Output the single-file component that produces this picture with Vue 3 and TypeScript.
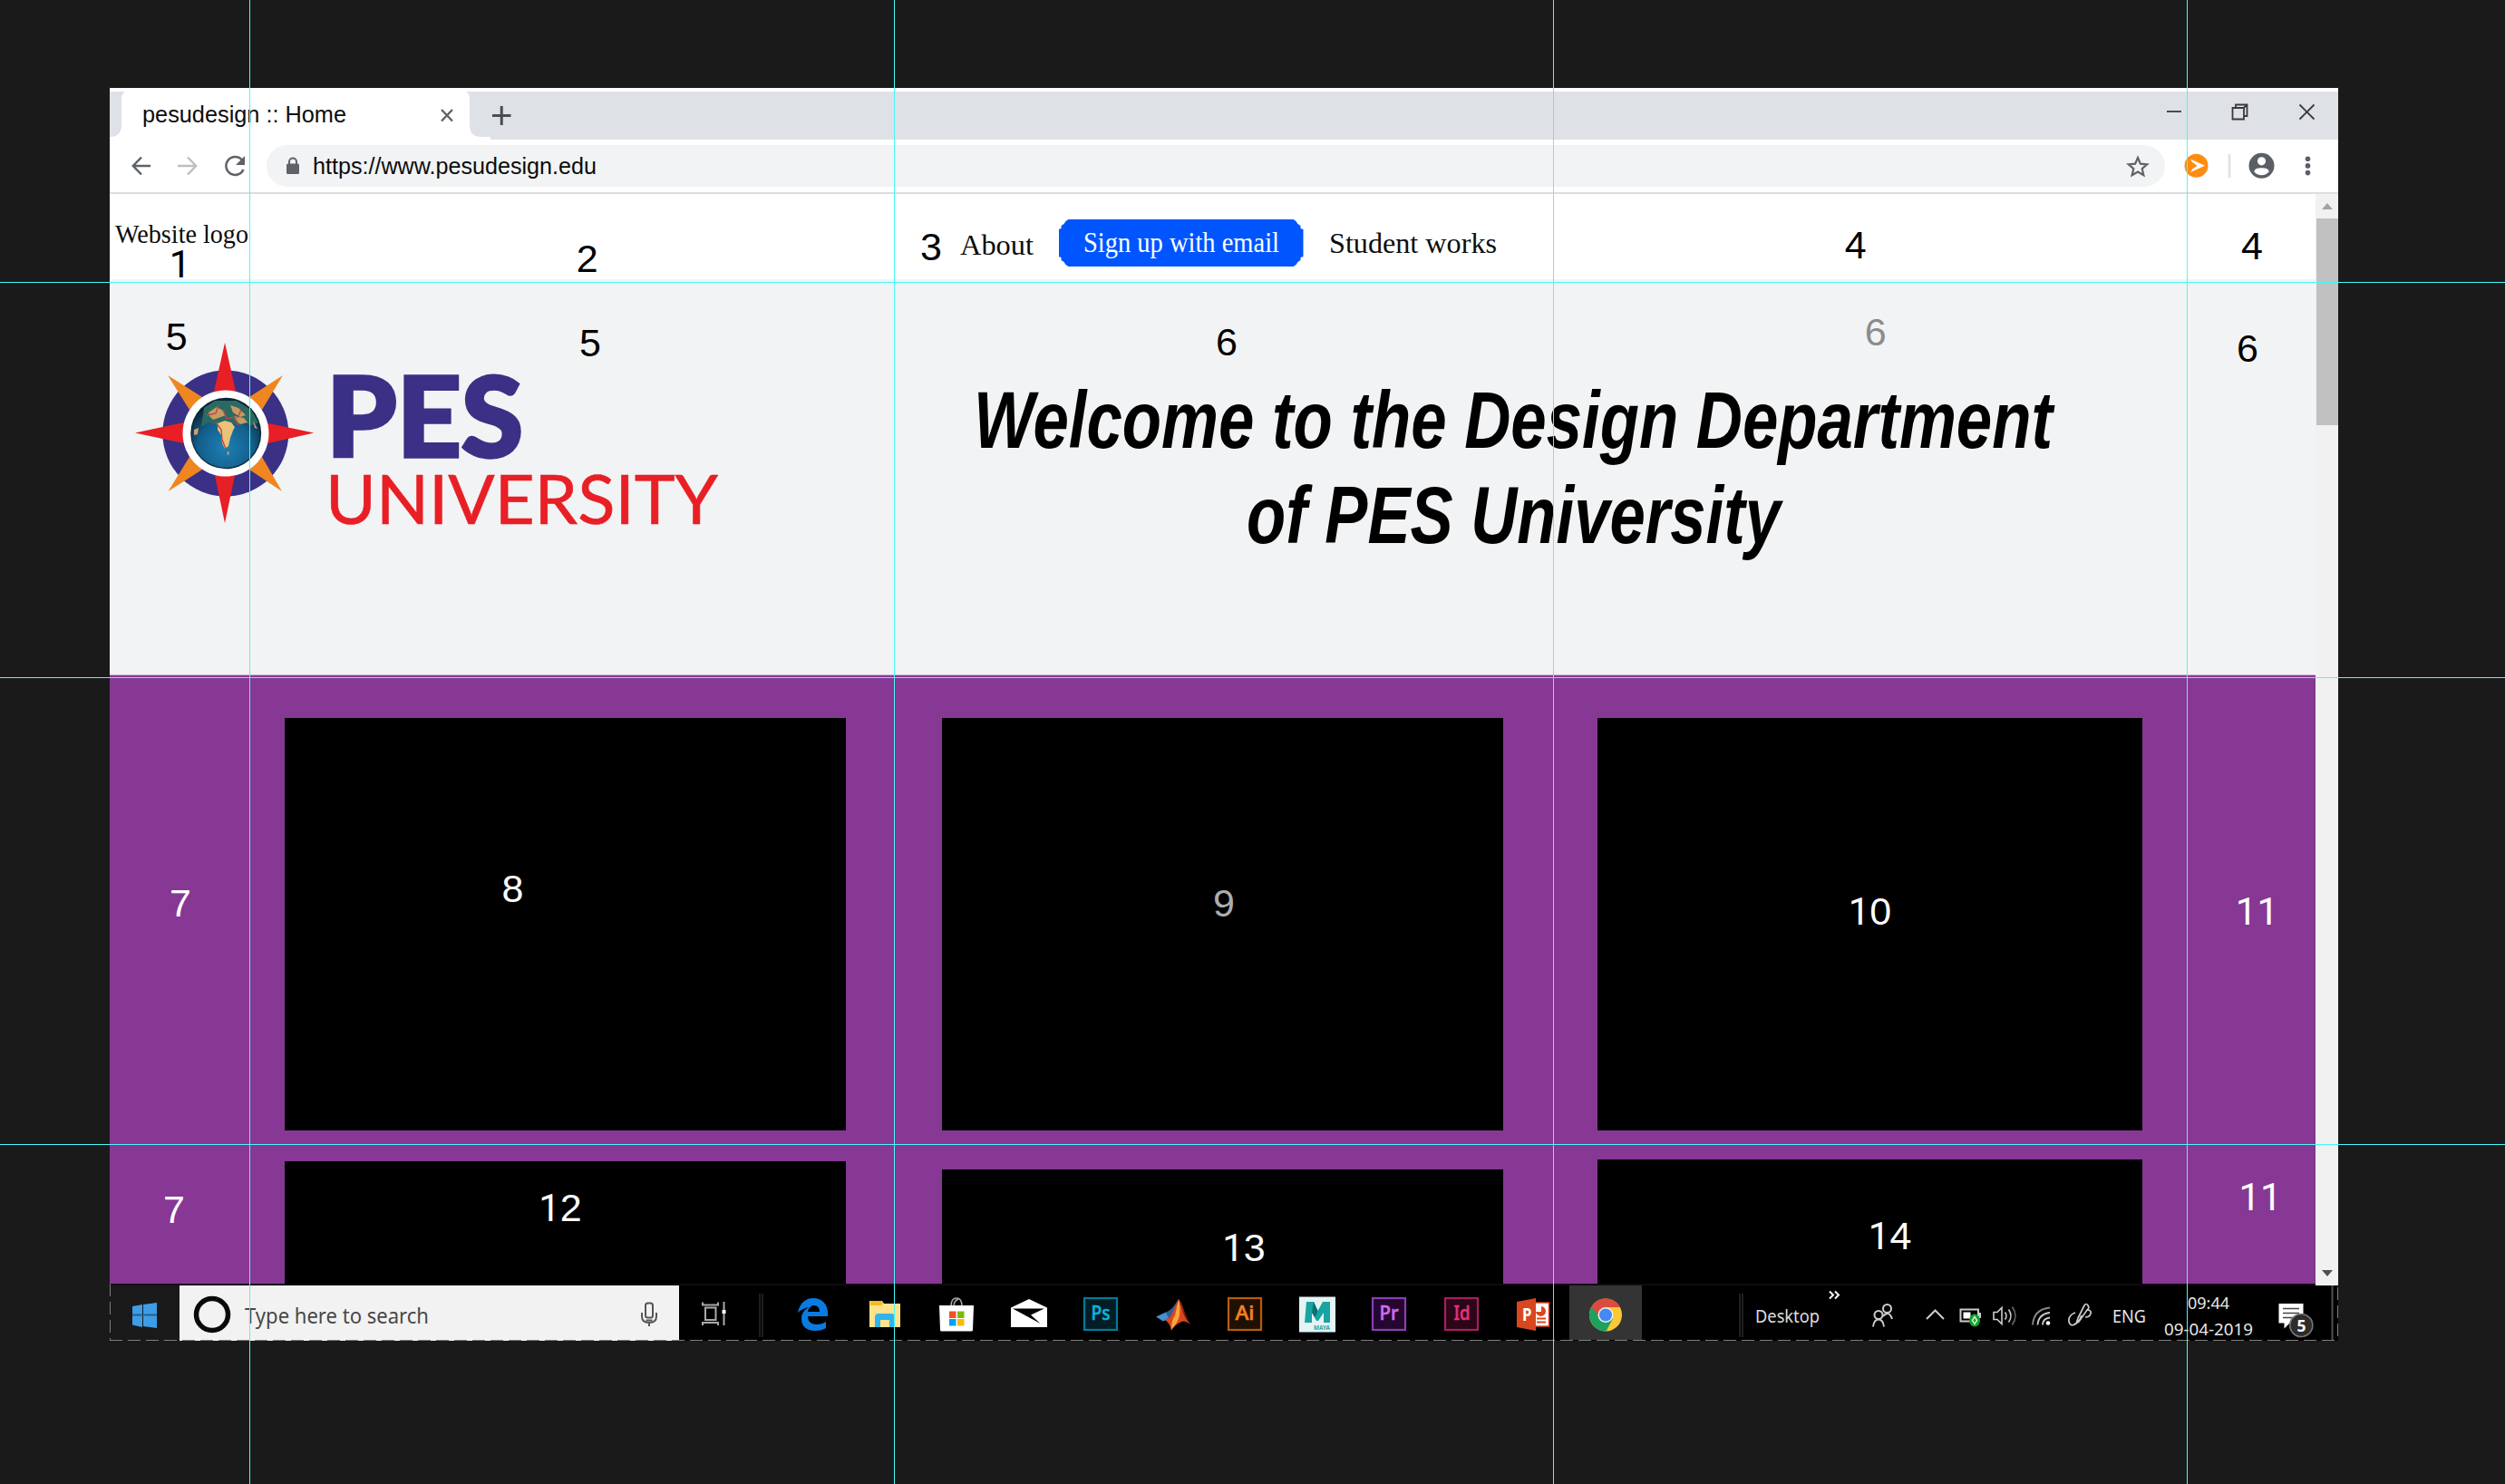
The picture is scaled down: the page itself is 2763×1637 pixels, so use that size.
<script setup lang="ts">
import { h, type FunctionalComponent } from 'vue'

interface FitProps {
  t: string
  w: number
  size: number
  y: number
  h: number
  family?: string
  fill?: string
  weight?: string | number
  slant?: string
}

/* Text fitted to an exact advance width, with its baseline at y inside a box of height h */
const Fit: FunctionalComponent<FitProps> = (p) =>
  h('svg', { width: p.w, height: p.h, style: 'flex:none;display:block;overflow:visible' }, [
    h(
      'text',
      {
        x: 0,
        y: p.y,
        'font-size': p.size,
        'font-family': p.family ?? '"Liberation Sans", sans-serif',
        'font-weight': p.weight ?? 400,
        'font-style': p.slant ?? 'normal',
        fill: p.fill ?? '#0c0c0c',
        textLength: p.w,
        lengthAdjust: 'spacingAndGlyphs',
      },
      p.t,
    ),
  ])
Fit.props = ['t', 'w', 'size', 'y', 'h', 'family', 'fill', 'weight', 'slant']

const serif = '"Liberation Serif", serif'
const ui = '"Noto Sans", "Open Sans", sans-serif'

interface Mark {
  t: string
  x: number
  y: number
  c?: string
}

const marks: Mark[] = [
  { t: '1', x: 198.5, y: 305.6 },
  { t: '2', x: 647.6, y: 300 },
  { t: '3', x: 1027, y: 287.3 },
  { t: '4', x: 2046.6, y: 284.6 },
  { t: '4', x: 2484, y: 285.6 },
  { t: '5', x: 194.8, y: 386.4 },
  { t: '5', x: 651, y: 393.4 },
  { t: '6', x: 1353, y: 391.8 },
  { t: '6', x: 2068.6, y: 380.8, c: '#8c8c8c' },
  { t: '6', x: 2479, y: 399 },
  { t: '7', x: 199, y: 1011, c: '#fff' },
  { t: '8', x: 565.4, y: 994.6, c: '#fff' },
  { t: '9', x: 1350, y: 1011, c: '#adadad' },
  { t: '10', x: 2062.4, y: 1020.2, c: '#fff' },
  { t: '11', x: 2489.4, y: 1020.2, c: '#fff' },
  { t: '7', x: 192, y: 1349, c: '#fff' },
  { t: '12', x: 618, y: 1347.4, c: '#fff' },
  { t: '13', x: 1372, y: 1390.6, c: '#fff' },
  { t: '14', x: 2084.6, y: 1378, c: '#fff' },
  { t: '11', x: 2493, y: 1335, c: '#fff' },
]

const digitFont = (d: string) => (d === '1' ? 'Roboto, sans-serif' : '"Liberation Sans", sans-serif')
const digitSize = (d: string) => (d === '1' ? 42 : 43)

const guidesX = [275, 986, 1713, 2412]
const guidesY = [311, 747, 1262]

const adobe = [
  { t: 'Ps', c: '#0bb3dc', line: '#067a97', bg: '#021d26' },
  { t: 'Ai', c: '#f58220', line: '#b85c0e', bg: '#201004' },
  { t: 'Pr', c: '#cb6df0', line: '#8a3fb0', bg: '#25062f' },
  { t: 'Id', c: '#e6307e', line: '#a52060', bg: '#2a0617' },
]
const apps = ['edge', 'folder', 'store', 'mail', 'Ps', 'matlab', 'Ai', 'maya', 'Pr', 'Id', 'ppt', 'chrome']
const adobeOf = (n: string) => adobe.find((a) => a.t === n)
</script>

<template>
  <div class="stage">
    <div class="window">
      <div class="tabs">
        <svg class="tab" width="420" height="57" viewBox="0 0 420 57">
          <path d="M0 57V54q13 0 13-13V13q0-10 8-10H389q8 0 8 10V41q0 13 13 13h10v3z" fill="#fff" />
        </svg>
        <div class="tab-row">
          <Fit class="tab-title" t="pesudesign :: Home" :w="225" :size="25" :y="37.700" :h="57" />
          <svg class="tab-close" width="14" height="57"><path d="M1 24 13 36.500M13 24 1 36.500" stroke="#5f6368" stroke-width="2.400" /></svg>
          <svg class="tab-add" width="21" height="57"><path d="M0 30.500H20.500M10.250 20V41" stroke="#4a4d51" stroke-width="3" /></svg>
          <svg class="win-ctl" width="165" height="57" fill="none" stroke="#3a3a3a" stroke-width="1.800">
            <path d="M1 26H17" />
            <path d="M73.500 22H86v12.500H73.500zM77 22V18.500H89.500V31H86M86 22l3.500-3.500" />
            <path d="M147.500 18.500 163.500 34.500M163.500 18.500 147.500 34.500" />
          </svg>
        </div>
      </div>

      <div class="toolbar">
        <svg class="nav" width="128" height="58" fill="none" stroke="#5f6368" stroke-width="2.500">
          <path d="M21 29H2M11 19.500 1.800 29 11 38.500" />
          <path d="M51 29H71M62 19.500 71.200 29 62 38.500" stroke="#bdbfc1" />
          <path d="M122 22.500A10 10 0 1 0 123.500 33" />
          <path d="M125 18v10h-10z" fill="#5f6368" stroke="none" />
        </svg>
        <div class="address">
          <svg width="16" height="46">
            <rect x="1" y="20.500" width="14" height="11.500" rx="1.500" fill="#5f6368" />
            <path d="M4 21v-2.500a4 4 0 0 1 8 0v2.500" fill="none" stroke="#5f6368" stroke-width="2" />
          </svg>
          <Fit class="url" t="https://www.pesudesign.edu" :w="313" :size="25.500" :y="32" :h="46" />
          <svg class="star" width="26" height="46" viewBox="0 0 26 46">
            <path d="M13 14l2.900 6.700 7.300.7-5.500 4.800 1.700 7.100L13 29.500l-6.400 3.800 1.700-7.100-5.500-4.800 7.300-.7z" fill="none" stroke="#5f6368" stroke-width="2.200" />
          </svg>
        </div>
        <svg class="tools" width="150" height="58">
          <circle cx="13.500" cy="28.800" r="13" fill="#ff8c12" />
          <path d="M7 21.500l16 7.300L7 36l4.500-7.200z" fill="#fff" />
          <path d="M9.500 25l5 3.800-5 3.700" fill="#ff8c12" />
          <path d="M50 16V42" stroke="#e0e1e3" stroke-width="2.600" />
          <circle cx="85.500" cy="28.800" r="14" fill="#5a5f66" />
          <circle cx="85.500" cy="23.800" r="4.600" fill="#fff" />
          <path d="M77.300 35.500q0-4.300 8.200-4.300t8.200 4.300q-3 3.700-8.200 3.700t-8.200-3.700z" fill="#fff" />
          <circle v-for="cy in [21.200, 28.900, 36.600]" :key="cy" cx="136.500" :cy="cy" r="2.800" fill="#5a5f66" />
        </svg>
      </div>

      <div class="viewport">
        <div class="page">
          <header class="site-head">
            <Fit class="logo-text" t="Website logo" :w="147" :size="30" :y="54.200" :h="94" :family="serif" />
            <Fit class="about" t="About" :w="81" :size="31" :y="66.500" :h="94" :family="serif" />
            <div class="signup">
              <Fit t="Sign up with email" :w="216" :size="31" :y="35.500" :h="52" :family="serif" fill="#fff" />
            </div>
            <Fit class="works" t="Student works" :w="185" :size="31" :y="65" :h="94" :family="serif" />
          </header>

          <section class="hero">
            <svg class="brand" width="650" height="200" viewBox="149 378 650 200">
              <defs>
                <radialGradient id="sea" cx=".5" cy=".7" r=".65">
                  <stop offset="0" stop-color="#1d80b4" />
                  <stop offset=".6" stop-color="#135f8c" />
                  <stop offset="1" stop-color="#0a2434" />
                </radialGradient>
                <clipPath id="ball"><ellipse cx="249.200" cy="478" rx="38" ry="38.500" /></clipPath>
              </defs>
              <circle cx="248.800" cy="478" r="69.500" fill="#3a3086" />
              <path d="M185 414 223 438 209 452zM312 414 275 438 289 452zM185.500 542 223 518 209 504zM311 542 275 518 289 504z" fill="#f0861f" />
              <path d="M248 378l12.500 56h-25zM248 577l11.500-55h-23zM149 477.500l56-12v24zM346.300 477.500l-55-11.500v24z" fill="#e81f25" />
              <circle cx="249" cy="478" r="47.500" fill="#fff" />
              <ellipse cx="249.200" cy="478" rx="39" ry="39.300" fill="#0b2735" />
              <g clip-path="url(#ball)">
                <circle cx="249" cy="478" r="38" fill="url(#sea)" />
                <path d="M225 450l12-8 24 0 16 10 8 14-9 4-7-6-10 4-10-5-9 6-10-3-8 5z" fill="#2b6a62" />
                <path d="M230 455l9-6 7 4 3 5-8 3-6 2-4-4zM254 447l9 3 8 8-6 2-8-5zM258 459l11 2 4 5-8 2-6-5z" fill="#c99a62" />
                <path d="M240 467l8-3 7 2 4 5-2 4-3 8-2 9-4 3-3-6-1-9-4-6z" fill="#eac27a" />
                <path d="M238 466l6 8 1 11 4 10M246 452l4 10 9-2 4 9M228 458l10-2 3-9M266 452l-4 9" fill="none" stroke="#b54a4a" stroke-width="1.400" />
                <path d="M214 474l5-2-1 7-4 1zM250 499l3-1-1 5zM279 464l5 9-3-1z" fill="#d89a6a" />
              </g>
              <text x="360" y="503.500" textLength="217" lengthAdjust="spacingAndGlyphs" font-family="Lato, sans-serif" font-weight="900" font-size="122" stroke="#3a3086" stroke-width="3.500" fill="#3a3086">PES</text>
              <text x="359" y="578" textLength="433" lengthAdjust="spacingAndGlyphs" font-family="Lato, sans-serif" font-size="75" stroke="#e81f25" stroke-width=".6" fill="#e81f25">UNIVERSITY</text>
            </svg>
            <div class="welcome">
              <Fit t="Welcome to the Design Department" :w="1190" :size="89" :y="76" :h="104.500" weight="bold" slant="italic" fill="#000" />
              <Fit t="of PES University" :w="589" :size="89" :y="76" :h="104" weight="bold" slant="italic" fill="#000" />
            </div>
          </section>

          <section class="gallery">
            <div class="col c1"><div class="tile" /><div class="tile rest" /></div>
            <div class="col c2"><div class="tile" /><div class="tile rest" /></div>
            <div class="col c3"><div class="tile" /><div class="tile rest" /></div>
          </section>
        </div>

        <div class="scroll">
          <div class="arrow up"><i /></div>
          <div class="thumb" />
          <div class="arrow down"><i /></div>
        </div>
      </div>

      <footer class="taskbar">
        <div class="start">
          <svg width="27" height="28" viewBox="0 0 27 28">
            <path d="M0 4 11 2v25L0 24.500zM12 2 27 0v28L12 26z" fill="#3f9de6" />
            <path d="M0 13.500H27" stroke="#23608f" stroke-width="2" />
          </svg>
        </div>
        <div class="search">
          <svg class="ring" width="46" height="60"><ellipse cx="23" cy="32" rx="17.500" ry="17.500" fill="none" stroke="#0a0a0a" stroke-width="5.500" /></svg>
          <Fit t="Type here to search" :w="203" :size="24" :y="42" :h="60" :family="ui" fill="#484848" />
          <svg class="mic" width="20" height="60" fill="none" stroke="#555" stroke-width="2">
            <rect x="6" y="19.500" width="8" height="16" rx="2.500" />
            <path d="M2 30v4q0 7 8 7t8-7v-4M10 41v4M6.500 38.500h7" />
          </svg>
        </div>
        <svg class="taskview" width="28" height="60" fill="none" stroke="#aaa" stroke-width="2">
          <path d="M4 24.500H15.500V38H4zM1 18.500v3H18v-3M1 44v-3H18v3M24.500 18v26" />
          <rect x="22.500" y="27" width="4" height="4" fill="#fff" stroke="none" />
        </svg>
        <div class="rule r1" />

        <div class="apps">
          <div v-for="name in apps" :key="name" class="app" :class="{ active: name === 'chrome' }">
            <svg width="40" height="40" viewBox="0 0 40 40">
              <g v-if="adobeOf(name)">
                <rect x="2" y="2" width="36" height="35" :fill="adobeOf(name)!.bg" :stroke="adobeOf(name)!.line" stroke-width="2.200" />
                <text :x="name === 'Id' ? 11.500 : 9.500" y="26" :textLength="name === 'Id' ? 18 : 21" lengthAdjust="spacingAndGlyphs" font-family="'Noto Sans', sans-serif" font-weight="500" font-size="22.500" :fill="adobeOf(name)!.c" :stroke="adobeOf(name)!.c" stroke-width=".6">{{ name }}</text>
              </g>
              <path v-else-if="name === 'edge'" fill="#0a7be0" d="M4 18C6 8 12 2 21 2c10 0 16 7 16 16v4H15c0 6 4 9 10 9 4 0 7-1 10-3v7c-3 2-7 3-12 3C14 38 8 33 8 25c0-6 3-10 8-13-5 1-9 3-12 6zM15 17h13c0-4-2-7-6-7s-6 3-7 7z" />
              <g v-else-if="name === 'folder'">
                <path d="M3 5h14l2 3h18v26H3z" fill="#ffe28c" />
                <path d="M4 5h12l2 3-2 2H4z" fill="#f6bb22" />
                <path d="M9 34V23q0-4 4-4h14q4 0 4 4v11h-6v-8H15v8z" fill="#2fb4ec" />
              </g>
              <g v-else-if="name === 'store'">
                <path d="M14 11q0-9 6-9t6 9M17 11q0-6 5-8" fill="none" stroke="#aaa" stroke-width="1.500" />
                <path d="M1 10H39l-1 27q0 1.500-1.500 1.500h-33Q2 38.500 2 37z" fill="#fff" />
                <path d="M12 16.500h7.500v7.500H12z" fill="#f25022" />
                <path d="M21 16.500h7.500v7.500H21z" fill="#7fba00" />
                <path d="M12 25h7.500v7.500H12z" fill="#00a4ef" />
                <path d="M21 25h7.500v7.500H21z" fill="#ffb900" />
              </g>
              <g v-else-if="name === 'mail'">
                <path d="M0 12.500 20 3l20 9.500V34H0z" fill="#fff" />
                <path d="M2 13.500H37L22 20.500l10.500 9.500z" fill="#000" />
              </g>
              <g v-else-if="name === 'matlab'">
                <path d="M1 22.500l11-5 5 6-8 4z" fill="#4a8fd0" />
                <path d="M12 17.500q8-3 13-14l-6 22-4-1z" fill="#2f5f9a" />
                <path d="M11 26q4-1 7-5l8-18q3 3 6 13 3 10 7 15-5-5-10-3-7 3-11 10-1-8-7-12z" fill="#d9471d" />
                <path d="M18 36q0-10 4-15l4-18q2 8 1 18-2 9-9 15z" fill="#f9a63a" />
                <path d="M26 3q3 3 6 13 3 10 7 15-6-6-8-13T26 3z" fill="#7c1d14" />
              </g>
              <g v-else-if="name === 'maya'">
                <rect x="0" y=".5" width="40" height="39" fill="#e4f3f3" />
                <path d="M6 29 8 6h8l4.500 10L26 6h8v23h-7V18l-6 9h-2l-5-9v11z" fill="#1aa3a0" />
                <path d="M16 6l4.500 10-3 7L14 18z" fill="#0c6f72" />
                <text x="16" y="37" font-family="'Noto Sans', sans-serif" font-weight="bold" font-size="7" textLength="18" lengthAdjust="spacingAndGlyphs" fill="#2aa5a3">MAYA</text>
              </g>
              <g v-else-if="name === 'ppt'">
                <rect x="20" y="7" width="17.500" height="26" fill="#fff" stroke="#d9471f" stroke-width="1.500" />
                <path d="M23 17a5.500 5.500 0 1 0 6-6v6z" fill="#d9471f" />
                <path d="M24 24.500h10M24 28.500h10" stroke="#d9471f" stroke-width="2" />
                <path d="M2 6 23 2v36L2 34z" fill="#d9471f" />
                <text x="8" y="27" font-family="'Noto Sans', sans-serif" font-weight="bold" font-size="19" textLength="10.500" lengthAdjust="spacingAndGlyphs" fill="#fff">P</text>
              </g>
              <g v-else>
                <circle cx="20" cy="20.500" r="18" fill="#fbc934" />
                <path d="M20 20.500 4.500 11.500A18 18 0 0 0 20.500 38.500L28 24.500z" fill="#1ea15f" />
                <path d="M20 20.500H12L4.300 11.800A18 18 0 0 1 35.800 12H20z" fill="#dc4b3e" />
                <circle cx="20" cy="20.500" r="8.500" fill="#f1f1f1" />
                <circle cx="20" cy="20.500" r="7" fill="#4688f4" />
              </g>
            </svg>
          </div>
        </div>

        <div class="rule r2" />
        <Fit class="desk" t="Desktop" :w="71" :size="19.500" :y="40.500" :h="60" :family="ui" fill="#ddd" />
        <svg class="tray" width="306" height="60" viewBox="2015 1418 306 60" fill="none" stroke="#ccc" stroke-width="2">
          <path d="M2018 1424.500l4 4-4 4M2024 1424.500l4 4-4 4" stroke="#fff" />
          <circle cx="2081.500" cy="1443.500" r="4.500" />
          <circle cx="2072" cy="1450.500" r="4.500" />
          <path d="M2066 1463.500q1-8 6-8t6 8M2077 1452q2-3 5-3t5 6" />
          <path d="M2125 1455l9.500-9.500 9.500 9.500" />
          <rect x="2162.500" y="1444.500" width="19.500" height="13" />
          <rect x="2165.500" y="1447.500" width="8" height="7" fill="#fff" stroke="none" />
          <path d="M2184 1448v6" />
          <ellipse cx="2178" cy="1456.500" rx="6" ry="7" fill="#16a329" stroke="none" />
          <path d="M2178 1452.500l-2.500 4 2.500 4 2.500-4z" stroke="#e9ffe9" stroke-width="1.400" />
          <path d="M2199 1447.500h4l5-5v18l-5-5h-4z" stroke-width="1.600" />
          <path d="M2211.500 1447.500q3 4 0 8M2215.500 1444.500q5 7 0 14" stroke-width="1.600" />
          <path d="M2219.500 1441.500q7 10 0 20" stroke="#666" stroke-width="1.600" />
          <g stroke-width="1.800">
            <path d="M2242 1461.500q1-17 19-19" stroke="#888" />
            <path d="M2247.500 1461.500q1-12 13.500-13.500" />
            <path d="M2253 1461.500q0-7 8-8" />
          </g>
          <circle cx="2259" cy="1459.500" r="2.300" fill="#fff" stroke="none" />
          <path d="M2292 1454l7-14q2-3 4 0t-1 5l-9 13-3 2zM2289 1448q-8 3-7 10 2 7 9 1 4-4 5-8M2302 1445q5 0 4 4t-6 4" stroke-width="1.700" />
        </svg>
        <Fit class="lang" t="ENG" :w="37" :size="19" :y="40.500" :h="60" :family="ui" fill="#e6e6e6" />
        <div class="clock">
          <Fit t="09:44" :w="46" :size="18.500" :y="26" :h="28" :family="ui" fill="#e6e6e6" />
          <Fit t="09-04-2019" :w="98" :size="18.500" :y="27.300" :h="28" :family="ui" fill="#e6e6e6" />
        </div>
        <svg class="notes" width="64" height="60" viewBox="2514 1418 64 60">
          <path d="M2514.500 1438h27v21.500h-15l-6 6v-6h-6z" fill="#fff" />
          <path d="M2519 1443.500h18M2519 1448.500h18M2519 1453.500h12" stroke="#444" stroke-width="1.600" />
          <circle cx="2539.300" cy="1462" r="12.500" fill="#2c2c2c" stroke="#777" stroke-width="1.600" />
          <text x="2534.500" y="1468.500" font-family="'Noto Sans', sans-serif" font-weight="bold" font-size="18" textLength="10" lengthAdjust="spacingAndGlyphs" fill="#fff">5</text>
          <path d="M2573.500 1418V1478" stroke="#505050" stroke-width="2" />
        </svg>
      </footer>
    </div>

    <svg class="overlay" width="2763" height="1637">
      <path d="M121 1478.500H2579" stroke="#7d7d7d" stroke-width="1" stroke-dasharray="14 6" />
      <path d="M121.500 1416V1479M2578.500 1420V1479" stroke="#7d7d7d" stroke-width="1" stroke-dasharray="14 6" />
      <text v-for="(m, i) in marks" :key="i" :x="m.x" :y="m.y" text-anchor="middle" :fill="m.c ?? '#000'">
        <tspan v-for="(d, j) in m.t" :key="j" :font-family="digitFont(d)" :font-size="digitSize(d)">{{ d }}</tspan>
      </text>
      <rect v-for="x in guidesX" :key="'x' + x" :x="x" y="0" width="1" height="1637" fill="#4af8f8" />
      <rect v-for="y in guidesY" :key="'y' + y" x="0" :y="y" width="2763" height="1" fill="#4af8f8" />
    </svg>
  </div>
</template>

<style>
body {
  background: #1a1a1a;
}
</style>

<style scoped>
.stage {
  position: relative;
  width: 2763px;
  height: 1637px;
  box-sizing: border-box;
  padding: 97px 0 0 121px;
  background: #1a1a1a;
  overflow: hidden;
}
.window {
  width: 2458px;
  height: 1382px;
  display: flex;
  flex-direction: column;
  background: #fff;
}
.overlay {
  position: absolute;
  left: 0;
  top: 0;
}
.tabs {
  position: relative;
  height: 57px;
  flex: none;
  background: linear-gradient(#fff 0 4px, #dee1e6 4px);
}
.tab {
  position: absolute;
  left: 0;
  top: 0;
}
.tab-row {
  position: relative;
  display: flex;
}
.tab-title {
  margin-left: 35.500px;
}
.tab-close {
  margin-left: 104px;
}
.tab-add {
  margin-left: 43.500px;
}
.win-ctl {
  margin-left: auto;
  margin-right: 25.500px;
}
.toolbar {
  display: flex;
  height: 58px;
  flex: none;
  border-bottom: 2px solid #dcdddd;
}
.nav {
  margin-left: 24px;
}
.address {
  display: flex;
  width: 2094px;
  height: 46px;
  box-sizing: border-box;
  margin: 6px 0 0 21px;
  padding-left: 21px;
  border-radius: 23px;
  background: #f1f3f4;
}
.url {
  margin-left: 14px;
}
.star {
  margin-left: auto;
  margin-right: 17px;
}
.tools {
  margin-left: 21px;
}
.viewport {
  display: flex;
  height: 1204px;
  flex: none;
}
.page {
  width: 2433px;
  display: flex;
  flex-direction: column;
}
.site-head {
  display: flex;
  height: 94px;
  flex: none;
  background: #fff;
}
.logo-text {
  margin-left: 6px;
}
.about {
  margin-left: 784.500px;
}
.signup {
  width: 270px;
  height: 52px;
  box-sizing: border-box;
  margin: 28px 0 0 28px;
  padding-left: 27px;
  background: #0055ff;
  clip-path: polygon(0 11px, 3px 10px, 3px 7px, 6px 5px, 8px 2px, 11px 0, 259px 0, 262px 2px, 264px 5px, 267px 7px, 267px 10px, 270px 11px, 270px 41px, 267px 42px, 267px 45px, 264px 47px, 262px 50px, 259px 52px, 11px 52px, 8px 50px, 6px 47px, 3px 45px, 3px 42px, 0 41px);
}
.works {
  margin-left: 28.500px;
}
.hero {
  display: flex;
  height: 437px;
  flex: none;
  background: #f1f3f4;
  box-shadow: inset 0 -1px #cbb3d0;
}
.brand {
  margin: 70px 0 0 28px;
  flex: none;
  overflow: visible;
}
.welcome {
  display: flex;
  flex-direction: column;
  align-items: center;
  width: 1190px;
  margin: 110px 0 0 275px;
}
.gallery {
  display: flex;
  flex: 1;
  min-height: 0;
  padding: 47px 0 2px 193px;
  background: #863894;
  box-shadow: inset 0 -2px #120a14;
}
.col {
  display: flex;
  flex-direction: column;
}
.c1 {
  width: 618.500px;
  gap: 34px;
}
.c2 {
  width: 619px;
  margin-left: 106px;
  gap: 43px;
}
.c3 {
  width: 601px;
  margin-left: 104.500px;
  gap: 32px;
}
.tile {
  height: 455px;
  background: #000;
}
.tile.rest {
  height: auto;
  flex: 1;
}
.scroll {
  display: flex;
  flex-direction: column;
  width: 25px;
  background: #f1f1f1;
}
.arrow {
  height: 27px;
  display: flex;
  align-items: center;
  justify-content: center;
}
.arrow i {
  border: 6px solid transparent;
}
.up i {
  border-top: 0;
  border-bottom: 7px solid #a3a3a3;
}
.down {
  margin-top: auto;
}
.down i {
  border-bottom: 0;
  border-top: 7px solid #505050;
}
.thumb {
  height: 228px;
  margin-left: 1px;
  background: #c1c1c1;
}
.taskbar {
  display: flex;
  height: 61px;
  flex: none;
  background: #000;
}
.start {
  width: 77px;
  display: flex;
  align-items: center;
  padding-left: 25px;
  box-sizing: border-box;
  padding-bottom: 1px;
  padding-top: 5px;
  background: #1a1a1a;
}
.search {
  display: flex;
  width: 551px;
  background: #f2f2f2;
}
.ring {
  margin: 0 13px 0 13px;
}
.mic {
  margin-left: auto;
  margin-right: 23px;
}
.taskview {
  margin-left: 25px;
}
.rule {
  width: 1px;
  height: 48px;
  margin-top: 9px;
  border-left: 2px solid #1e1e1e;
  border-right: 2px solid #1e1e1e;
}
.r1 {
  margin-left: 35px;
}
.apps {
  display: flex;
  width: 954px;
  margin-left: 14.500px;
}
.app {
  width: 79.500px;
  display: flex;
  justify-content: center;
  padding-top: 12px;
  height: 48px;
}
.active {
  background: #343434;
}
.r2 {
  margin-left: 107px;
}
.desk {
  margin-left: 13px;
}
.tray {
  flex: none;
  margin-left: 8px;
}
.lang {
  margin-left: 9px;
}
.clock {
  display: flex;
  flex-direction: column;
  align-items: center;
  width: 98px;
  margin-left: 20px;
}
.notes {
  margin-left: 28px;
}
</style>
